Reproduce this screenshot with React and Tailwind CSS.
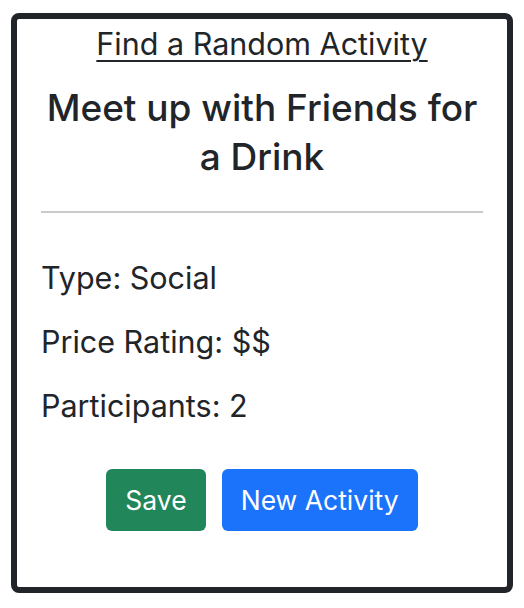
export default function App() {
  const details = [
    ['Type', 'Social'],
    ['Price Rating', '$$'],
    ['Participants', '2'],
  ];

  return (
    <div className="min-h-screen bg-white pt-[13px] px-[11px] text-[#212529]" style={{ fontFamily: 'Inter, "Noto Sans", sans-serif' }}>
      <div className="w-[502px] h-[580px] border-[6px] border-[#212529] rounded-[8px] px-[24px] pt-[5px] flex flex-col">
        <p className="text-center text-[30.5px] leading-[40px]">
          <a href="#" className="underline underline-offset-[5px] decoration-[1.5px] text-[#212529]">Find a Random Activity</a>
        </p>

        <h3 className="mt-[19px] text-center text-[37px] leading-[49px] font-medium">
          Meet up with Friends for a Drink
        </h3>

        <hr className="mt-[30px] border-t-[2px] border-[#c9cacb]" />

        <div className="mt-[46px] flex flex-col gap-[26px]">
          {details.map(([label, value]) => (
            <p key={label} className="text-[30.5px] leading-[38px]">
              {label}: {value}
            </p>
          ))}
        </div>

        <div className="mt-[44px] flex justify-center gap-[16px]">
          <button type="button" className="h-[62px] px-[19px] rounded-[6px] bg-[#21875a] text-white text-[26.5px] leading-[38px]">
            Save
          </button>
          <button type="button" className="h-[62px] px-[19px] rounded-[6px] bg-[#1b72fb] text-white text-[26.5px] leading-[38px]">
            New Activity
          </button>
        </div>
      </div>
    </div>
  );
}
